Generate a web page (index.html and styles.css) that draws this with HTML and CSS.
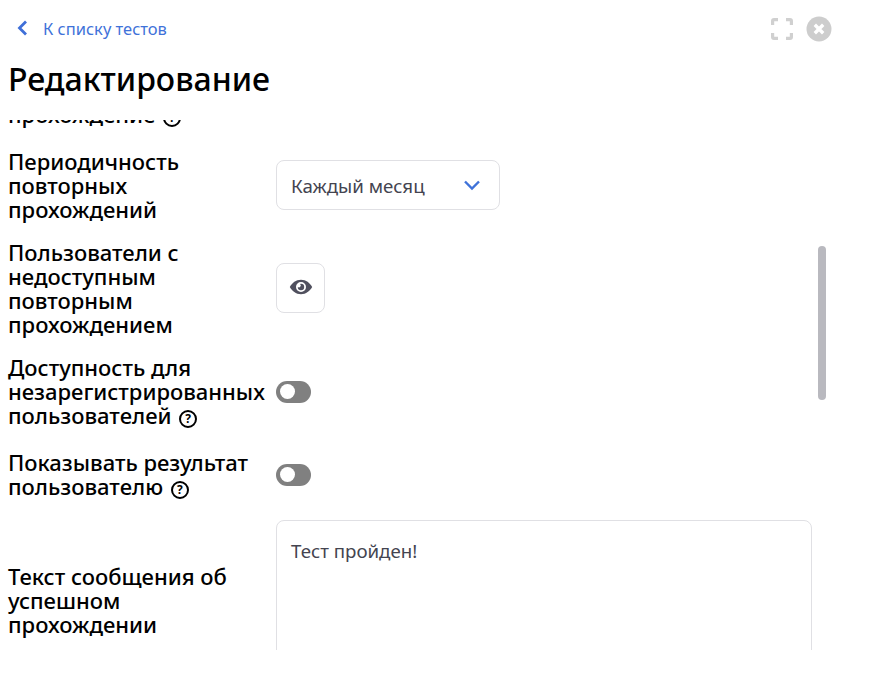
FILE: index.html
```html
<!DOCTYPE html>
<html lang="ru">
<head>
    <meta charset="UTF-8">
    <meta name="viewport" content="width=device-width, initial-scale=1.0">
    <title>Редактирование</title>
    <link rel="stylesheet" href="styles.css">
</head>
<body>
    <div class="page">
        <div class="top-bar">
            <a class="back-link" href="#">
                <svg class="back-icon" width="12" height="16" viewBox="0 0 12 16"><path d="M10 1.500 L3.500 8 L10 14.500" fill="none" stroke="#3f6fd8" stroke-width="2.800"/></svg>
                К списку тестов
            </a>
            <div class="window-icons">
                <svg width="22" height="22" viewBox="0 0 22 22"><path d="M1.600 7 V3 Q1.600 1.600 3 1.600 H7 M15 1.600 H19 Q20.400 1.600 20.400 3 V7 M20.400 15 V19 Q20.400 20.400 19 20.400 H15 M7 20.400 H3 Q1.600 20.400 1.600 19 V15" fill="none" stroke="#d0d0d0" stroke-width="3.200"/></svg>
                <svg width="26" height="26" viewBox="0 0 26 26"><circle cx="13" cy="13" r="12.500" fill="#cdcdcd"/><path d="M8.800 8.800 L17.200 17.200 M17.200 8.800 L8.800 17.200" stroke="#fff" stroke-width="3.400"/></svg>
            </div>
        </div>
        <h1 class="title">Редактирование</h1>
        <div class="scroll-area">
            <div class="form">
                <div class="row">
                    <div class="label">Повторное<br>прохождение <span class="help">?</span></div>
                </div>
                <div class="row">
                    <div class="label">Периодичность<br>повторных<br>прохождений</div>
                    <div class="select">
                        <span>Каждый месяц</span>
                        <svg width="18" height="12" viewBox="0 0 18 12"><path d="M2 2.500 L9 9.500 L16 2.500" fill="none" stroke="#3f72d9" stroke-width="2.400"/></svg>
                    </div>
                </div>
                <div class="row">
                    <div class="label">Пользователи с<br>недоступным<br>повторным<br>прохождением</div>
                    <div class="icon-button">
                        <svg class="eye-icon" width="24" height="16" viewBox="0 0 24 16"><path fill-rule="evenodd" fill="#50505e" d="M12 .800 C17 .800 21 4 23.200 8 C21 12 17 15.200 12 15.200 C7 15.200 3 12 .800 8 C3 4 7 .800 12 .800 Z M12 3 A5 5 0 1 0 12 13 A5 5 0 1 0 12 3 Z M12 4.800 A3.200 3.200 0 1 1 8.800 8 A1.800 1.800 0 0 0 11 5 Z"/></svg>
                    </div>
                </div>
                <div class="row">
                    <div class="label">Доступность для<br>незарегистрированных<br>пользователей <span class="help">?</span></div>
                    <div class="toggle"></div>
                </div>
                <div class="row row-tight">
                    <div class="label">Показывать результат<br>пользователю <span class="help">?</span></div>
                    <div class="toggle"></div>
                </div>
                <div class="row">
                    <div class="label">Текст сообщения об<br>успешном<br>прохождении</div>
                    <div class="textarea">Тест пройден!</div>
                </div>
            </div>
            <div class="scrollbar"></div>
        </div>
    </div>
</body>
</html>
```

FILE: styles.css
```css
body {
    margin: 0;
    font-family: "Noto Sans", sans-serif;
    background-color: white;
}
.page {
    width: 890px;
    height: 677px;
    overflow: hidden;
}
.top-bar {
    display: flex;
    align-items: center;
    justify-content: space-between;
    height: 26px;
    padding: 16px 58px 0 16px;
}
.back-link {
    display: flex;
    align-items: center;
    gap: 15px;
    margin-bottom: 2px;
    font-size: 16.500px;
    color: #3f72d9;
    text-decoration: none;
}
.window-icons {
    display: flex;
    align-items: center;
    gap: 13px;
}
.title {
    margin: 15px 0 0 8px;
    font-size: 32px;
    font-weight: 500;
    line-height: 44px;
    color: black;
}
.scroll-area {
    position: relative;
    height: 530px;
    margin-top: 19px;
    overflow: hidden;
}
.form {
    display: flex;
    flex-direction: column;
    gap: 19px;
    margin-top: -42px;
    padding-left: 8px;
}
.row {
    display: flex;
    align-items: center;
}
.row-tight {
    margin-bottom: -1px;
}
.label {
    width: 268px;
    flex-shrink: 0;
    font-size: 22px;
    font-weight: 500;
    line-height: 24px;
    color: black;
}
.help {
    display: inline-block;
    width: 14px;
    height: 14px;
    margin-left: 2px;
    border: 2px solid black;
    border-radius: 50%;
    font-size: 12px;
    font-weight: 700;
    line-height: 14px;
    text-align: center;
    vertical-align: -2px;
    transform: translateY(-3px);
}
.select {
    display: flex;
    align-items: center;
    justify-content: space-between;
    box-sizing: border-box;
    width: 224px;
    height: 50px;
    padding: 0 18px 0 14px;
    border: 1px solid #e0e0e4;
    border-radius: 8px;
    font-size: 18.700px;
    color: #444450;
}
.icon-button {
    display: flex;
    align-items: center;
    justify-content: center;
    box-sizing: border-box;
    width: 49px;
    height: 50px;
    border: 1px solid #e0e0e4;
    border-radius: 8px;
}
.eye-icon {
    margin-bottom: 2px;
}
.toggle {
    position: relative;
    width: 35px;
    height: 22px;
    margin-bottom: 3px;
    border-radius: 11px;
    background-color: #808080;
}
.toggle::after {
    content: "";
    position: absolute;
    left: 4px;
    top: 3.500px;
    width: 15px;
    height: 15px;
    border-radius: 50%;
    background-color: white;
}
.textarea {
    box-sizing: border-box;
    width: 536px;
    height: 159px;
    padding: 18px 14px;
    border: 1px solid #e0e0e4;
    border-radius: 8px;
    font-size: 18.700px;
    line-height: 24px;
    color: #444450;
}
.scrollbar {
    position: absolute;
    top: 126px;
    left: 818px;
    width: 8px;
    height: 154px;
    border-radius: 4px;
    background-color: #b9b9bf;
}
```
